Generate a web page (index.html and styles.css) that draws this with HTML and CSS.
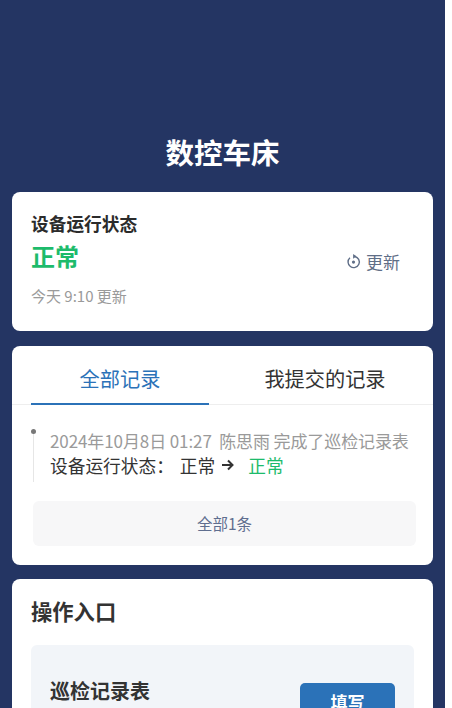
FILE: index.html
```html
<!DOCTYPE html>
<html lang="zh-CN">
<head>
<meta charset="utf-8">
<title>数控车床</title>
<link rel="stylesheet" href="styles.css">
</head>
<body>
<main class="page">
  <h1 class="title">数控车床</h1>

  <section class="card status">
    <div class="status-main">
      <div class="status-label">设备运行状态</div>
      <div class="status-value">正常</div>
      <div class="status-time">今天 9:10 更新</div>
    </div>
    <div class="refresh">
      <svg class="refresh-icon" viewBox="0 0 16 16" aria-hidden="true">
        <path d="M9.4 2.6A6 6 0 1 1 4.2 4" fill="none" stroke="#5f6e87" stroke-width="1.5"/>
        <path d="M7.6 0l3.6 2.5-3.6 2.5z" fill="#5f6e87"/>
        <circle cx="8" cy="8.6" r="1.7" fill="#5f6e87"/>
      </svg>
      <span>更新</span>
    </div>
  </section>

  <section class="card records">
    <div class="tabs">
      <div class="tab active">全部记录</div>
      <div class="tab">我提交的记录</div>
    </div>
    <div class="timeline">
      <div class="entry">
        <div class="entry-meta">2024年10月8日 01:27&nbsp; 陈思雨 完成了巡检记录表</div>
        <div class="entry-detail">
          <span class="detail-label">设备运行状态：</span>
          <span>正常</span>
          <svg class="arrow" viewBox="0 0 14 14" aria-hidden="true">
            <path d="M1 7h11M7 2.5L11.5 7 7 11.500" fill="none" stroke="#333" stroke-width="2"/>
          </svg>
          <span class="ok">正常</span>
        </div>
      </div>
    </div>
    <div class="all-count">全部1条</div>
  </section>

  <section class="card actions">
    <h2 class="actions-title">操作入口</h2>
    <div class="action-item">
      <span class="action-name">巡检记录表</span>
      <span class="action-btn">填写</span>
    </div>
  </section>
</main>
</body>
</html>
```
FILE: styles.css
```css
* { box-sizing: border-box; }
html, body {
  margin: 0;
  height: 708px;
  overflow: hidden;
  background: #fff;
}
body {
  font-family: "Noto Sans CJK SC", "Noto Sans", sans-serif;
}
.page {
  width: 445px;
  height: 708px;
  overflow: hidden;
  background: #243563;
  padding: 131px 12px 0;
}
.title {
  margin: 0 0 20px;
  height: 41px;
  line-height: 41px;
  text-align: center;
  font-size: 28.5px;
  font-weight: 700;
  color: #fff;
}
.card {
  width: 421px;
  background: #fff;
  border-radius: 8px;
}
.status {
  height: 139px;
  padding: 19px 33px 0 19px;
  display: flex;
  justify-content: space-between;
  margin-bottom: 15px;
}
.status-label {
  font-size: 17.7px;
  line-height: 24px;
  font-weight: 700;
  color: #2b2b2b;
}
.status-value {
  margin-top: 4px;
  font-size: 24px;
  line-height: 34px;
  font-weight: 700;
  color: #1dbb6b;
}
.status-time {
  margin-top: 13px;
  font-size: 15px;
  line-height: 20px;
  color: #9a9a9a;
}
.refresh {
  display: flex;
  align-items: center;
  gap: 5px;
  height: 30px;
  margin-top: 35px;
  font-size: 17px;
  color: #5f6e87;
}
.refresh-icon {
  width: 15px;
  height: 15px;
}
.records {
  height: 219px;
  margin-bottom: 14px;
}
.tabs {
  display: grid;
  grid-template-columns: 178px 1fr;
  column-gap: 8px;
  height: 59px;
  padding-left: 19px;
  border-bottom: 1px solid #eeeeee;
}
.tab {
  height: 59px;
  line-height: 66px;
  text-align: center;
  font-size: 20.2px;
  color: #333;
}
.tab.active {
  color: #2b72b8;
  border-bottom: 2px solid #2b72b8;
}
.timeline {
  padding: 26px 19px 0 21px;
}
.entry {
  position: relative;
  height: 53px;
  padding-left: 16px;
  border-left: 1px solid #e6e6e6;
}
.entry::before {
  content: "";
  position: absolute;
  left: -3px;
  top: 0;
  width: 5px;
  height: 5px;
  border-radius: 50%;
  background: #777;
}
.entry-meta {
  font-size: 17px;
  letter-spacing: -0.1px;
  line-height: 24px;
  margin-top: -2px;
  white-space: nowrap;
  color: #9a9a9a;
}
.entry-detail {
  display: flex;
  align-items: center;
  font-size: 17.7px;
  line-height: 24px;
  color: #333;
  white-space: nowrap;
}
.detail-label {
  margin-right: 6px;
}
.arrow {
  width: 14px;
  height: 14px;
  margin: 0 13px 0 6px;
}
.ok {
  color: #1dbb6b;
}
.all-count {
  margin: 19px 17px 0 21px;
  height: 45px;
  line-height: 45px;
  text-align: center;
  border-radius: 6px;
  background: #f7f7f8;
  font-size: 15.5px;
  color: #5f6e8f;
}
.actions {
  height: 200px;
  padding: 17px 19px 0;
}
.actions-title {
  margin: 0;
  font-size: 21.3px;
  line-height: 30px;
  font-weight: 700;
  color: #333;
}
.action-item {
  margin-top: 19px;
  width: 383px;
  height: 120px;
  border-radius: 6px;
  background: #f2f5f9;
  padding: 32px 19px 0;
  display: flex;
  justify-content: space-between;
  align-items: flex-start;
}
.action-name {
  font-size: 20px;
  line-height: 28px;
  font-weight: 700;
  color: #333;
}
.action-btn {
  width: 95px;
  height: 38px;
  line-height: 38px;
  margin-top: 6px;
  text-align: center;
  border-radius: 5px;
  background: #2b72b8;
  color: #fff;
  font-size: 17px;
  font-weight: 700;
}
```
